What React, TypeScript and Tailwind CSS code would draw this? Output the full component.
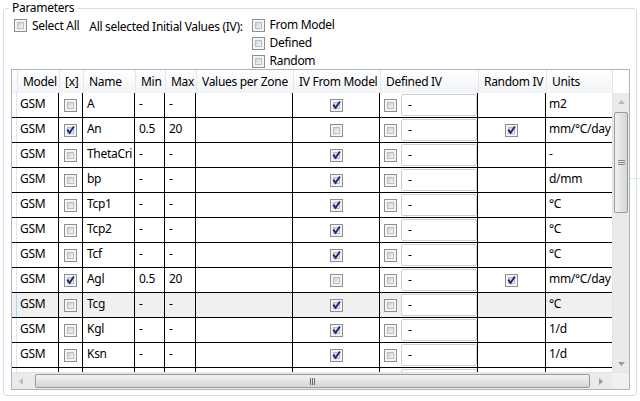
import React from "react";

type Row = {
  name: string;
  sel: boolean;
  min: string;
  max: string;
  fromModel: boolean;
  random: boolean;
  units: string;
  highlight?: boolean;
};

const rows: Row[] = [
  { name: "A", sel: false, min: "-", max: "-", fromModel: true, random: false, units: "m2" },
  { name: "An", sel: true, min: "0.5", max: "20", fromModel: false, random: true, units: "mm/°C/day" },
  { name: "ThetaCri", sel: false, min: "-", max: "-", fromModel: true, random: false, units: "-" },
  { name: "bp", sel: false, min: "-", max: "-", fromModel: true, random: false, units: "d/mm" },
  { name: "Tcp1", sel: false, min: "-", max: "-", fromModel: true, random: false, units: "°C" },
  { name: "Tcp2", sel: false, min: "-", max: "-", fromModel: true, random: false, units: "°C" },
  { name: "Tcf", sel: false, min: "-", max: "-", fromModel: true, random: false, units: "°C" },
  { name: "Agl", sel: true, min: "0.5", max: "20", fromModel: false, random: true, units: "mm/°C/day" },
  { name: "Tcg", sel: false, min: "-", max: "-", fromModel: true, random: false, units: "°C", highlight: true },
  { name: "Kgl", sel: false, min: "-", max: "-", fromModel: true, random: false, units: "1/d" },
  { name: "Ksn", sel: false, min: "-", max: "-", fromModel: true, random: false, units: "1/d" },
  { name: "", sel: false, min: "", max: "", fromModel: true, random: false, units: "" },
];

// column widths, left to right
const cols = [
  { label: "", w: "w-[5px]" },
  { label: "Model", w: "w-[42px]" },
  { label: "[x]", w: "w-[24px]" },
  { label: "Name", w: "w-[52px]" },
  { label: "Min", w: "w-[30px]" },
  { label: "Max", w: "w-[31px]" },
  { label: "Values per Zone", w: "w-[97px]" },
  { label: "IV From Model", w: "w-[87px]" },
  { label: "Defined IV", w: "w-[98px]" },
  { label: "Random IV", w: "w-[68px]" },
  { label: "Units", w: "w-[66px]" },
];

function Checkbox({ checked }: { checked?: boolean }) {
  return (
    <div className="relative w-[13px] h-[13px] shrink-0 border border-[#8e8f8f] bg-[#f4f4f4] p-[2px]">
      <div className="w-full h-full border border-[#b9bec5] bg-linear-to-br from-[#cdd1d7] to-[#f6f7f8]" />
      {checked && (
        <svg className="absolute left-0 top-0" width="11" height="11" viewBox="0 0 11 11">
          <path d="M2.8 5.4 L4.6 7.9 L8.4 2.2" fill="none" stroke="#1c2a7a" strokeWidth="1.9" strokeLinecap="square" />
        </svg>
      )}
    </div>
  );
}

function Cell({ w, className = "", children }: { w: string; className?: string; children?: React.ReactNode }) {
  return (
    <div className={`${w} h-full shrink-0 border-r border-black overflow-hidden whitespace-nowrap ${className}`}>
      {children}
    </div>
  );
}

function DataRow({ r }: { r: Row }) {
  return (
    <div className={`flex h-[25px] shrink-0 border-b border-black ${r.highlight ? "bg-[#f0f0f0]" : "bg-white"}`}>
      <div className={`w-[5px] h-full shrink-0 border-r ${r.highlight ? "border-[#a8d8f4]" : "border-[#e2e6ea]"}`} />
      <Cell w={cols[1].w} className="pl-[3px] pt-[3px]">{r.name ? "GSM" : ""}</Cell>
      <Cell w={cols[2].w} className="flex items-center justify-center">
        <Checkbox checked={r.sel} />
      </Cell>
      <Cell w={cols[3].w} className="pl-[4px] pt-[3px]">{r.name}</Cell>
      <Cell w={cols[4].w} className="pl-[4px] pt-[3px]">{r.min}</Cell>
      <Cell w={cols[5].w} className="pl-[4px] pt-[3px]">{r.max}</Cell>
      <Cell w={cols[6].w} />
      <Cell w={cols[7].w} className="flex items-center justify-center">
        <Checkbox checked={r.fromModel} />
      </Cell>
      <Cell w={cols[8].w} className="flex items-center pl-[4px] gap-[3px]">
        <Checkbox />
        <div className="h-[22px] w-[77px] ml-px border border-[#c9d0d8] rounded-[2px] bg-white pl-[6px] pt-[2px]">
          {r.name ? "-" : ""}
        </div>
      </Cell>
      <Cell w={cols[9].w} className="flex items-center justify-center">
        {r.random && <Checkbox checked />}
      </Cell>
      <Cell w={cols[10].w} className="pl-[3px] pt-[3px] border-r-0">{r.units}</Cell>
    </div>
  );
}

function VScroll() {
  return (
    <div className="w-[17px] shrink-0 flex flex-col bg-[#eaeaeb] border-l border-[#e4e4e4]">
      <div className="h-[23px] shrink-0 bg-white" />
      <div className="h-[17px] shrink-0 flex items-center justify-center">
        <svg width="7" height="4" viewBox="0 0 7 4"><path d="M0 4 L3.5 0 L7 4Z" fill="#b9b9b9" /></svg>
      </div>
      <div className="mt-[2px] mx-px h-[101px] rounded-[2px] border border-[#9a9a9a] bg-linear-to-r from-[#f2f2f2] to-[#d6d6d6] flex items-center justify-center">
        <div className="flex flex-col gap-px">
          <div className="w-[7px] h-px bg-[#8a8a8a]" />
          <div className="w-[7px] h-px bg-[#8a8a8a]" />
          <div className="w-[7px] h-px bg-[#8a8a8a]" />
        </div>
      </div>
      <div className="flex-1" />
      <div className="h-[17px] shrink-0 flex items-center justify-center">
        <svg width="7" height="4" viewBox="0 0 7 4"><path d="M0 0 L3.5 4 L7 0Z" fill="#9a9a9a" /></svg>
      </div>
    </div>
  );
}

function HScroll() {
  return (
    <div className="h-[17px] shrink-0 flex bg-[#eaeaeb] border-t border-[#e4e4e4]">
      <div className="w-[17px] shrink-0 flex items-center justify-center">
        <svg width="4" height="7" viewBox="0 0 4 7"><path d="M4 0 L0 3.5 L4 7Z" fill="#b9b9b9" /></svg>
      </div>
      <div className="my-px ml-[6px] w-[555px] rounded-[2px] border border-[#9a9a9a] bg-linear-to-b from-[#f2f2f2] to-[#d6d6d6] flex items-center justify-center">
        <div className="flex gap-px">
          <div className="w-px h-[7px] bg-[#6a6a6a]" />
          <div className="w-px h-[7px] bg-[#6a6a6a]" />
          <div className="w-px h-[7px] bg-[#6a6a6a]" />
        </div>
      </div>
      <div className="flex-1 flex items-center justify-center">
        <svg width="4" height="7" viewBox="0 0 4 7"><path d="M0 0 L4 3.5 L0 7Z" fill="#9a9a9a" /></svg>
      </div>
      <div className="w-[17px] shrink-0 bg-[#f0f0f0]" />
    </div>
  );
}

export default function App() {
  return (
    <div
      className="relative w-[640px] h-[401px] bg-white text-[12px] leading-[16px] tracking-[-0.3px] text-black overflow-hidden"
      style={{ fontFamily: '"Segoe UI", "Noto Sans", sans-serif' }}
    >
      <fieldset className="mx-[3px] border border-[#d5dfe5] rounded-[3px] pb-[5px]">
        <legend className="ml-[5px] px-[3px] leading-[16px]">Parameters</legend>

        <div className="flex items-start h-[53px]">
          <div className="flex items-center mt-[3px] ml-[10px] h-[13px]">
            <Checkbox />
            <span className="ml-[5px]">Select All</span>
          </div>
          <div className="ml-[10px] mt-[3px] leading-[16px]">All selected Initial Values (IV):</div>
          <div className="ml-[9px] flex flex-col">
            {["From Model", "Defined", "Random"].map((l) => (
              <div key={l} className="flex items-center h-[18px]">
                <Checkbox />
                <span className="ml-[5px]">{l}</span>
              </div>
            ))}
          </div>
        </div>

        <div className="ml-[7px] w-[619px] border border-[#a7b6c6] flex flex-col">
          <div className="flex h-[302px]">
            <div className="w-[600px] flex flex-col overflow-hidden">
              <div className="flex h-[23px] shrink-0 bg-linear-to-b from-white to-[#f1f3f6]">
                {cols.map((c, i) => (
                  <div
                    key={i}
                    className={`${c.w} h-full shrink-0 pl-[5px] pt-[4px] whitespace-nowrap overflow-hidden ${i < cols.length - 1 ? "border-r border-[#e4e8ed]" : ""}`}
                  >
                    {c.label}
                  </div>
                ))}
              </div>
              {rows.map((r, i) => (
                <DataRow key={i} r={r} />
              ))}
            </div>
            <VScroll />
          </div>
          <HScroll />
        </div>
      </fieldset>
      <div className="absolute left-[630px] top-[178px] w-[10px] h-px bg-[#dfe4e8]" />
    </div>
  );
}
